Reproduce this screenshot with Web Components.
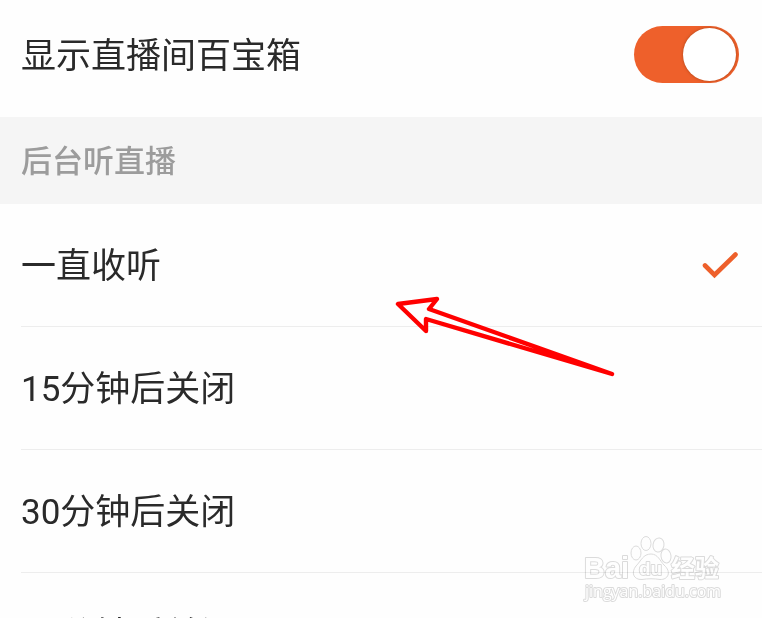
<!DOCTYPE html>
<html lang="zh-CN">
<head>
<meta charset="UTF-8">
<meta name="viewport" content="width=device-width, initial-scale=1">
<title>直播设置</title>
<style>
  :root {
    --accent: #ee602b;
    --text: #2a2a2a;
    --muted: #9c9c9c;
    --line: #ededed;
    --gutter: 21px;
  }

  body {
    margin: 0;
    height: 100vh;
    overflow: hidden;
    position: relative;
    background: #fefefe;
    color: var(--text);
    font-family: Roboto, "Noto Sans CJK SC", sans-serif;
  }
</style>
</head>
<body>
  <switch-row checked>显示直播间百宝箱</switch-row>
  <option-group label="后台听直播">
    <option-row selected>一直收听</option-row>
    <option-row>15分钟后关闭</option-row>
    <option-row>30分钟后关闭</option-row>
    <option-row>60分钟后关闭</option-row>
  </option-group>
  <pointer-arrow></pointer-arrow>
  <site-mark></site-mark>

<script>
/**
 * 开关行
 */
class SwitchRow extends HTMLElement {
  constructor() {
    super();
    this.attachShadow({ mode: 'open' });
  }

  connectedCallback() {
    this.shadowRoot.innerHTML = `
      <style>
        :host {
          display: block;
        }

        label {
          display: flex;
          align-items: center;
          justify-content: space-between;
          box-sizing: border-box;
          min-height: 117px;
          padding: 0 23px 8px var(--gutter);
          font-size: 35px;
          line-height: 48px;
        }

        span {
          padding-top: 4px;
        }

        input {
          appearance: none;
          display: flex;
          box-sizing: border-box;
          width: 105px;
          height: 57px;
          margin: 0;
          padding: 2px 3px;
          border-radius: 29px;
          background: #ccc;
        }

        input::before {
          content: "";
          width: 53px;
          height: 53px;
          border-radius: 50%;
          background: white;
          box-shadow: 0 0 3px rgba(120, 50, 10, 0.6);
        }

        input:checked {
          justify-content: flex-end;
          background: var(--accent);
        }
      </style>
      <label>
        <span><slot></slot></span>
        <input type="checkbox" role="switch">
      </label>
    `;
    this.shadowRoot.querySelector('input').checked = this.hasAttribute('checked');
  }
}

/**
 * 带标题的单选组
 */
class OptionGroup extends HTMLElement {
  constructor() {
    super();
    this.attachShadow({ mode: 'open' });
  }

  connectedCallback() {
    this.shadowRoot.innerHTML = `
      <style>
        :host {
          display: block;
        }

        h2 {
          display: flex;
          align-items: center;
          box-sizing: border-box;
          min-height: 87px;
          margin: 0;
          padding: 2px var(--gutter) 0;
          background: #f5f5f5;
          color: var(--muted);
          font-size: 31px;
          font-weight: 500;
          line-height: 44px;
        }
      </style>
      <section role="radiogroup" aria-labelledby="title">
        <h2 id="title">${this.getAttribute('label')}</h2>
        <slot></slot>
      </section>
    `;

    // 单选框在各自的 shadow root 中，由组负责互斥
    this.addEventListener('option-select', (e) => {
      this.querySelectorAll('option-row').forEach(row => {
        row.toggleAttribute('selected', row === e.target);
      });
    });
  }
}

class OptionRow extends HTMLElement {
  constructor() {
    super();
    this.attachShadow({ mode: 'open' });
  }

  static get observedAttributes() {
    return ['selected'];
  }

  connectedCallback() {
    this.shadowRoot.innerHTML = `
      <style>
        :host {
          display: block;
          padding-left: var(--gutter);
        }

        label {
          display: flex;
          align-items: center;
          justify-content: space-between;
          box-sizing: border-box;
          min-height: 123px;
          padding-right: 24px;
          border-bottom: 1px solid var(--line);
          font-size: 35px;
          line-height: 48px;
        }

        input {
          appearance: none;
          width: 0;
          height: 0;
          margin: 0;
        }

        span {
          flex: 1;
          padding-top: 4px;
        }

        svg {
          width: 36px;
          height: 28px;
          visibility: hidden;
        }

        input:checked ~ svg {
          visibility: visible;
        }
      </style>
      <label>
        <input type="radio">
        <span><slot></slot></span>
        <svg viewBox="0 0 36 28" fill="none" stroke="var(--accent)" stroke-width="4.6" stroke-linecap="round" aria-hidden="true">
          <path d="M3 14.5L12.5 24L33.500 3.500"/>
        </svg>
      </label>
    `;
    this.sync();
    this.shadowRoot.querySelector('input').addEventListener('change', () => {
      this.dispatchEvent(new CustomEvent('option-select', { bubbles: true }));
    });
  }

  attributeChangedCallback() {
    this.sync();
  }

  sync() {
    const input = this.shadowRoot.querySelector('input');
    if (input) input.checked = this.hasAttribute('selected');
  }
}

/**
 * 红色指示箭头，浮在列表之上
 */
class PointerArrow extends HTMLElement {
  constructor() {
    super();
    this.attachShadow({ mode: 'open' });
  }

  connectedCallback() {
    this.shadowRoot.innerHTML = `
      <style>
        :host {
          position: absolute;
          left: 394px;
          top: 294px;
          pointer-events: none;
        }

        svg {
          display: block;
        }
      </style>
      <svg width="222" height="84" viewBox="0 0 222 84" fill="none" stroke="#ff0000" stroke-width="4.4" stroke-linejoin="round" aria-hidden="true">
        <path d="M4 10L43 5L35 15L218 80L32 25V37Z"/>
      </svg>
    `;
  }
}

/**
 * 右下角水印
 */
class SiteMark extends HTMLElement {
  constructor() {
    super();
    this.attachShadow({ mode: 'open' });
  }

  connectedCallback() {
    this.shadowRoot.innerHTML = `
      <style>
        /* 正片叠底，让下面的分隔线透出来 */
        :host {
          position: absolute;
          right: 40px;
          bottom: 14px;
          pointer-events: none;
          mix-blend-mode: multiply;
        }

        svg {
          display: block;
        }

        text {
          font-family: "Liberation Sans", "Noto Sans CJK SC", sans-serif;
          font-weight: 700;
          paint-order: stroke;
        }

        .url {
          font-family: "Open Sans", sans-serif;
          font-weight: 400;
        }
      </style>
      <svg width="140" height="70" viewBox="0 0 140 70" fill="#ffffff" stroke="#dcdcdc" stroke-width="2" stroke-linejoin="round">
        <g stroke-width="1">
          <ellipse cx="54" cy="19" rx="5" ry="7"/>
          <ellipse cx="64" cy="9.500" rx="5" ry="7"/>
          <ellipse cx="76.500" cy="11" rx="5.500" ry="7" transform="rotate(10 76.500 11)"/>
          <ellipse cx="84" cy="22" rx="5" ry="7" transform="rotate(-8 84 22)"/>
          <path d="M69 20C76 20 78 27 82 31C90 38 86 46 78 45.500C72 44.500 66 44.500 60 45.500C51 46 49 38 54 32C59 27 61 20 69 20Z"/>
        </g>
        <text x="2" y="44" font-size="29">Bai</text>
        <text x="57" y="41" font-size="19">du</text>
        <text x="89" y="43" font-size="24">经验</text>
        <text class="url" x="3" y="63" font-size="16">jingyan.baidu.com</text>
      </svg>
    `;
  }
}

customElements.define('switch-row', SwitchRow);
customElements.define('option-group', OptionGroup);
customElements.define('option-row', OptionRow);
customElements.define('pointer-arrow', PointerArrow);
customElements.define('site-mark', SiteMark);
</script>
</body>
</html>
